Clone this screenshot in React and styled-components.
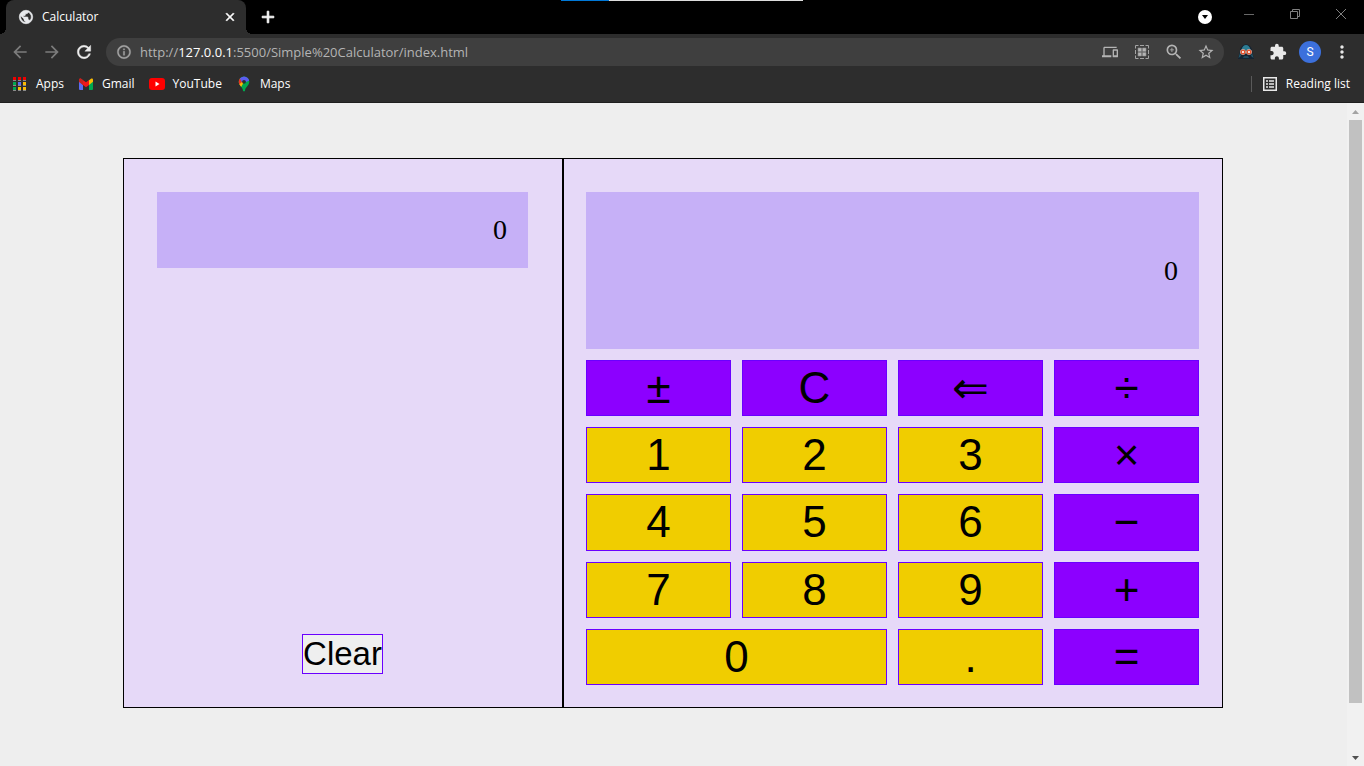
import React, { useState } from "react";
import styled, { createGlobalStyle } from "styled-components";
import {
  MdArrowBack, MdArrowForward, MdRefresh, MdInfoOutline, MdOutlineDevices,
  MdZoomIn, MdStarBorder, MdExtension, MdMoreVert, MdClose, MdAdd, MdPublic,
} from "react-icons/md";

const GlobalStyle = createGlobalStyle`
  *, *::before, *::after { box-sizing: border-box; }
  body { margin: 0; background: #eeeeee; }
  button { margin: 0; padding: 0; border: 0; background: none; color: inherit; font: inherit; cursor: pointer; }
  svg { display: block; flex: none; }
  svg path[fill="none"] { stroke: none; }
`;

const Browser = styled.div`
  display: flex;
  flex-direction: column;
  height: 100vh;
  font: 12px/16px "Open Sans", "Noto Sans", sans-serif;
  color: #ffffff;
`;

const TitleBar = styled.header`
  position: relative;
  display: flex;
  height: 34px;
  flex: none;
  padding-left: 6px;
  background: #000000;
`;

const EdgeStrip = styled.div`
  position: absolute;
  top: 0;
  left: 0;
  right: 0;
  width: 242px;
  height: 1px;
  margin: 0 auto;
  background: linear-gradient(to right, #0078d7 48px, #dddddd 48px);
`;

const Tab = styled.div`
  position: relative;
  display: flex;
  align-items: center;
  width: 240px;
  padding: 0 8px 0 12px;
  gap: 8px;
  border-radius: 8px 8px 0 0;
  background: #2d2d2d;

  &::before, &::after {
    content: "";
    position: absolute;
    bottom: 0;
    width: 6px;
    height: 6px;
  }
  &::before {
    right: 100%;
    background: radial-gradient(circle at 0 0, #000000 6px, #2d2d2d 6px);
  }
  &::after {
    left: 100%;
    background: radial-gradient(circle at 100% 0, #000000 6px, #2d2d2d 6px);
  }
`;

const TabTitle = styled.span`
  flex: 1;
`;

const PlainButton = styled.button`
  display: flex;
  align-items: center;
  justify-content: center;
  width: ${(p) => p.$w || 16}px;
  color: ${(p) => p.$color || "#ffffff"};
`;

const WindowControls = styled.div`
  display: flex;
  margin-left: auto;
`;

const WindowButton = styled(PlainButton)`
  height: 28px;
`;

const Toolbar = styled.nav`
  display: flex;
  align-items: center;
  flex: none;
  height: 36px;
  padding: 0 6px 0 4px;
  background: #2d2d2d;
`;

const ToolButton = styled(PlainButton)`
  width: 32px;
  height: 28px;
`;

const AddressBar = styled.div`
  display: flex;
  align-items: center;
  flex: 1;
  height: 28px;
  margin: 0 6px;
  padding: 0 2px;
  border-radius: 14px;
  background: #3f3f3f;
  color: #b4b4b4;
`;

const Address = styled.div`
  flex: 1;
  font-size: 13px;
  line-height: 20px;
  white-space: nowrap;
  outline: none;
`;

const Host = styled.span`
  color: #ffffff;
`;

const Avatar = styled.span`
  display: flex;
  align-items: center;
  justify-content: center;
  width: 22px;
  height: 22px;
  border-radius: 50%;
  background: #3c70dc;
  font: 12px/16px Roboto, sans-serif;
`;

const BookmarksBar = styled.nav`
  display: flex;
  align-items: center;
  flex: none;
  gap: 14px;
  height: 33px;
  padding: 0 14px 4px 12px;
  border-bottom: 1px solid #1f1f1f;
  background: #2d2d2d;
`;

const Bookmark = styled.a`
  display: flex;
  align-items: center;
  gap: 8px;
  color: inherit;
  text-decoration: none;
`;

const ReadingList = styled.button`
  display: flex;
  align-items: center;
  gap: 8px;
  height: 16px;
  margin-left: auto;
  padding-left: 10px;
  border-left: 1px solid #5a5a5a;
`;

const Viewport = styled.div`
  display: flex;
  flex: 1;
  min-height: 0;
`;

const Page = styled.main`
  flex: 1;
  padding: 55px 124px 0 123px;
  color: #000000;
`;

const Scrollbar = styled.div`
  display: flex;
  flex-direction: column;
  align-items: center;
  width: 17px;
  background: #f1f1f1;
`;

const ScrollArrow = styled(PlainButton)`
  height: 17px;
`;

const ScrollTrack = styled.div`
  flex: 1;
  width: 13px;
`;

const ScrollThumb = styled.div`
  height: 92.7%;
  background: #c1c1c1;
`;

const Calculator = styled.div`
  display: grid;
  grid-template-columns: 2fr 3fr;
  min-height: 550px;
`;

const Panel = styled.section`
  border: 1px solid #000000;
  background: #e6d9f8;
`;

const History = styled(Panel)`
  display: flex;
  flex-direction: column;
  justify-content: space-between;
  align-items: center;
  padding: 33px 34px 33px 33px;
`;

const Keypad = styled(Panel)`
  display: grid;
  grid-template-columns: repeat(4, 1fr);
  grid-template-rows: 157px repeat(5, 1fr);
  gap: 11px;
  padding: 33px 23px 22px 22px;
`;

const Display = styled.output`
  display: flex;
  align-items: center;
  justify-content: flex-end;
  width: 100%;
  min-height: 76px;
  grid-column: 1 / -1;
  padding: 0 21px;
  background: #c6b0f7;
  font: 28px/32px "Liberation Serif", serif;
`;

const Key = styled.button`
  && {
    grid-column: span ${(p) => p.$span || 1};
    border: 1px solid #6a00ff;
    background: ${(p) => (p.$operator ? "#8c00ff" : "#f0cd00")};
    font: 44px/50px "Liberation Sans", "DejaVu Sans", sans-serif;
  }
`;

const ClearButton = styled.button`
  && {
    border: 1px solid #6a00ff;
    background: #efefef;
    font: 33px/38px "Liberation Sans", sans-serif;
  }
`;

const AppsIcon = () => (
  <svg width="16" height="16" aria-hidden="true">
    {["#f00000", "#f00000", "#f00000", "#00a84f", "#5b6cf0", "#f9bb05", "#00a84f", "#f9bb05", "#f9bb05"].map((c, i) => {
      const x = 1 + (i % 3) * 5;
      const y = 1 + Math.floor(i / 3) * 5;
      return (
        <g key={i}>
          <rect x={x} y={y} width="3" height="3" fill={c} />
          <rect x={x} y={y + 3} width="3" height="1" fill="#8a8a8a" />
        </g>
      );
    })}
  </svg>
);

const GmailIcon = () => (
  <svg width="16" height="16" viewBox="0 0 16 16" aria-hidden="true">
    <path d="M1 5l4 2.500V14H2a1 1 0 0 1-1-1z" fill="#5b6cf0" />
    <path d="M15 5l-4 2.500V14h3a1 1 0 0 0 1-1z" fill="#00a84f" />
    <path d="M11 4.200L13 2.800c1-.7 2 0 2 1v2L11 9z" fill="#f9bb05" />
    <path d="M1 5.800V4c0-1.200 1.200-1.900 2.100-1.200L8 6.300l3-2.200V9l-3 2.300-3-2.300z" fill="#f01818" />
    <path d="M1 5.800V4c0-1.200 1.200-1.900 2.100-1.200L5 4.200V9z" fill="#c5221f" />
  </svg>
);

const YouTubeIcon = () => (
  <svg width="16" height="16" viewBox="0 0 16 16" aria-hidden="true">
    <rect y="2" width="16" height="12" rx="3" fill="#ff0000" />
    <path d="M6.500 5.500v5l4-2.500z" fill="#ffffff" />
  </svg>
);

const MapsIcon = () => (
  <svg width="16" height="16" viewBox="0 0 16 16" aria-hidden="true">
    <clipPath id="pin"><path d="M8 0.500a5.300 5.300 0 0 1 5.300 5.300c0 3.700-4 5.200-4.300 8.900q-1 1.600-2 0C6.700 11 2.700 9.500 2.700 5.800A5.300 5.300 0 0 1 8 .5z" /></clipPath>
    <g clipPath="url(#pin)">
      <rect width="16" height="16" fill="#00a84f" />
      <path d="M0 8l4-2h4L4.500 12H0z" fill="#f9bb05" />
      <path d="M0 2l4.500 0L6 6 3 8.500 0 9z" fill="#ea3323" />
      <path d="M3.500 2l4-2h8v3.500L10 6 6 6z" fill="#5b5cf0" />
      <circle cx="8" cy="5.800" r="1.900" fill="#2d2d2d" />
    </g>
  </svg>
);

const QrIcon = () => (
  <svg width="16" height="16" viewBox="0 0 16 16" aria-hidden="true">
    <g fill="transparent" stroke="#a4a4a4">
      <path d="M1.500 4.500v-3h3M11.500 1.500h3v3M14.500 11.500v3h-3M4.500 14.500h-3v-3M6 1.500h4M6 14.500h4M1.500 6v4M14.500 6v4" />
    </g>
    <path d="M4 4h3.500v3.500H4zM8.500 4H12v3.500H8.500zM4 8.500h3.500V12H4zM8.500 8.500H12V12H8.500z" fill="#b4b4b4" stroke="#8a8a8a" strokeWidth=".6" />
  </svg>
);

const SpyIcon = () => (
  <svg width="16" height="16" viewBox="0 0 16 16" aria-hidden="true">
    <path d="M0 15l2-8c0-4 3-6.500 6-6.500S14 3 14 7l2 8z" fill="#152433" />
    <path d="M3.500 6C4 2.500 6 1 8 1s4 1.500 4.500 5z" fill="#2c7c93" />
    <path d="M.5 14l1.500-5 1 3zM15.500 14L14 9l-1 3z" fill="#24596d" />
    <path d="M6 12h4l.5 2h-5z" fill="#2c6f86" />
    <path d="M7 12v2M9 12v2" stroke="#152433" />
    <circle cx="5" cy="8" r="2.800" fill="#f6e4dc" />
    <circle cx="11" cy="8" r="2.800" fill="#f6e4dc" />
    <circle cx="5" cy="8" r="1.800" fill="#ffffff" stroke="#e0532f" strokeWidth="1.400" />
    <circle cx="11" cy="8" r="1.800" fill="#ffffff" stroke="#e0532f" strokeWidth="1.400" />
  </svg>
);

const ListIcon = () => (
  <svg width="16" height="16" viewBox="0 0 16 16" fill="none" stroke="#e8e8e8" aria-hidden="true">
    <rect x="1.750" y="1.750" width="12.500" height="12.500" strokeWidth="1.500" />
    <path d="M4 5h2M7 5h5M4 8h2M7 8h5M4 11h2M7 11h5" strokeWidth="1.500" />
  </svg>
);

const TabSearchIcon = () => (
  <svg width="14" height="14" viewBox="0 0 14 14" aria-hidden="true">
    <circle cx="7" cy="7" r="7" fill="#ffffff" />
    <path d="M4 5h6L7 9z" fill="#000000" />
  </svg>
);

const MinimizeIcon = () => (
  <svg width="10" height="10" aria-hidden="true"><path d="M0 5.500h10" stroke="#686868" /></svg>
);

const RestoreIcon = () => (
  <svg width="10" height="10" fill="none" stroke="#808080" aria-hidden="true"><path d="M.5 2.500h7v7h-7zM2.500 2.500v-2h7v7h-2" /></svg>
);

const CrossIcon = () => (
  <svg width="10" height="10" stroke="#808080" aria-hidden="true"><path d="M0 0l10 10M10 0L0 10" /></svg>
);

const Triangle = ({ down }) => (
  <svg width="7" height="4" aria-hidden="true">
    <path d={down ? "M0 0h7L3.500 4z" : "M0 4h7L3.500 0z"} fill={down ? "#505050" : "#a3a3a3"} />
  </svg>
);

const bookmarks = [
  ["Apps", AppsIcon],
  ["Gmail", GmailIcon],
  ["YouTube", YouTubeIcon],
  ["Maps", MapsIcon],
];

const keys = ["±", "C", "⇐", "÷", "1", "2", "3", "×", "4", "5", "6", "−", "7", "8", "9", "+", "0", ".", "="];
const names = { "±": "Change sign", "⇐": "Backspace", "÷": "Divide", "×": "Multiply", "−": "Subtract", "+": "Add", "=": "Equals" };
const apply = { "+": (a, b) => a + b, "−": (a, b) => a - b, "×": (a, b) => a * b, "÷": (a, b) => a / b };

const initial = { value: "0", stored: null, op: null, fresh: true };

function press(state, key) {
  const { value, stored, op, fresh } = state;
  if (key === "C") return initial;
  if (key === "±") return { ...state, value: String(-Number(value)) };
  if (key === "⇐") return { ...state, value: value.length > 1 ? value.slice(0, -1) : "0" };
  if (/[0-9.]/.test(key)) {
    if (key === "." && !fresh && value.includes(".")) return state;
    return { ...state, value: fresh ? (key === "." ? "0." : key) : value + key, fresh: false };
  }
  const result = op && !fresh ? apply[op](stored, Number(value)) : Number(value);
  return { value: String(result), stored: result, op: key === "=" ? null : key, fresh: true };
}

export default function App() {
  const [state, setState] = useState(initial);
  const [last, setLast] = useState("0");

  const onKey = (key) => {
    const next = press(state, key);
    if (key === "=") setLast(next.value);
    setState(next);
  };

  return (
    <Browser>
      <GlobalStyle />
      <TitleBar>
        <EdgeStrip />
        <Tab>
          <MdPublic size={16} color="#e8eaed" strokeWidth={1} />
          <TabTitle>Calculator</TabTitle>
          <PlainButton aria-label="Close tab"><MdClose size={14} strokeWidth={1} /></PlainButton>
        </Tab>
        <PlainButton $w={44} aria-label="New tab"><MdAdd size={20} strokeWidth={1} /></PlainButton>
        <WindowControls>
          <PlainButton $w={42} aria-label="Search tabs"><TabSearchIcon /></PlainButton>
          <WindowButton $w={46} aria-label="Minimize"><MinimizeIcon /></WindowButton>
          <WindowButton $w={46} aria-label="Restore"><RestoreIcon /></WindowButton>
          <WindowButton $w={46} aria-label="Close window"><CrossIcon /></WindowButton>
        </WindowControls>
      </TitleBar>

      <Toolbar aria-label="Navigation">
        <ToolButton $color="#7c7c7c" aria-label="Back"><MdArrowBack size={20} /></ToolButton>
        <ToolButton $color="#7c7c7c" aria-label="Forward"><MdArrowForward size={20} /></ToolButton>
        <ToolButton $color="#ececec" aria-label="Reload"><MdRefresh size={20} strokeWidth={0.5} /></ToolButton>
        <AddressBar>
          <ToolButton $color="#a4a4a4" aria-label="Site information"><MdInfoOutline size={16} strokeWidth={0.5} /></ToolButton>
          <Address role="textbox" aria-label="Address" contentEditable suppressContentEditableWarning spellCheck={false}>
            http://<Host>127.0.0.1</Host>:5500/Simple%20Calculator/index.html
          </Address>
          <ToolButton $color="#b4b4b4" aria-label="Send to your devices"><MdOutlineDevices size={16} /></ToolButton>
          <ToolButton aria-label="QR code"><QrIcon /></ToolButton>
          <ToolButton $color="#b4b4b4" aria-label="Zoom"><MdZoomIn size={20} /></ToolButton>
          <ToolButton $color="#b4b4b4" aria-label="Bookmark this page"><MdStarBorder size={18} /></ToolButton>
        </AddressBar>
        <ToolButton aria-label="Spy extension"><SpyIcon /></ToolButton>
        <ToolButton $color="#e8e8e8" aria-label="Extensions"><MdExtension size={18} /></ToolButton>
        <ToolButton aria-label="Profile"><Avatar>S</Avatar></ToolButton>
        <ToolButton $color="#e8e8e8" aria-label="Menu"><MdMoreVert size={20} /></ToolButton>
      </Toolbar>

      <BookmarksBar aria-label="Bookmarks">
        {bookmarks.map(([name, Icon]) => (
          <Bookmark key={name} href="#"><Icon />{name}</Bookmark>
        ))}
        <ReadingList><ListIcon />Reading list</ReadingList>
      </BookmarksBar>

      <Viewport>
        <Page>
          <Calculator>
            <History aria-label="History">
              <Display>{last}</Display>
              <ClearButton onClick={() => setLast("0")}>Clear</ClearButton>
            </History>
            <Keypad aria-label="Calculator">
              <Display>{state.value}</Display>
              {keys.map((k) => (
                <Key
                  key={k}
                  $span={k === "0" ? 2 : 1}
                  $operator={!/[0-9.]/.test(k)}
                  aria-label={names[k]}
                  onClick={() => onKey(k)}
                >
                  {k}
                </Key>
              ))}
            </Keypad>
          </Calculator>
        </Page>
        <Scrollbar>
          <ScrollArrow aria-label="Scroll up"><Triangle /></ScrollArrow>
          <ScrollTrack><ScrollThumb /></ScrollTrack>
          <ScrollArrow aria-label="Scroll down"><Triangle down /></ScrollArrow>
        </Scrollbar>
      </Viewport>
    </Browser>
  );
}
